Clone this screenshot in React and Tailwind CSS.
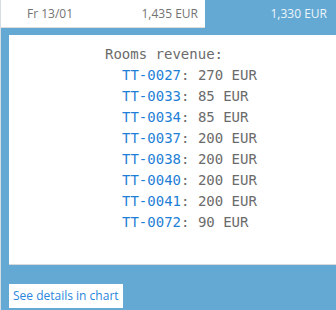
export default function App() {
  const rows = [
    ["TT-0027", "270"],
    ["TT-0033", "85"],
    ["TT-0034", "85"],
    ["TT-0037", "200"],
    ["TT-0038", "200"],
    ["TT-0040", "200"],
    ["TT-0041", "200"],
    ["TT-0072", "90"],
  ];
  return (
    <div className="w-[336px] h-[310px] overflow-hidden bg-white border-l border-[#d6dde3] flex flex-col" style={{ fontFamily: '"Open Sans", sans-serif' }}>
      <div className="flex h-[28px] shrink-0">
        <div className="w-[204px] flex items-center justify-between pl-[26px] pr-[7px] text-[12px] text-[#737373] border-b border-[#dcdcdc] bg-white">
          <span>Fr 13/01</span>
          <span>1,435 EUR</span>
        </div>
        <div className="flex-1 bg-[#64a9d3] flex items-center justify-end pr-[9px] text-[12px] text-[#eef5fa]">
          1,330 EUR
        </div>
      </div>
      <div className="flex-1 bg-[#64a9d3] pl-[8px] pt-[7px] flex flex-col">
        <div className="h-[230px] bg-white border-b border-[#d9d9d9] pl-[96px] pt-[9px]" style={{ fontFamily: '"DejaVu Sans Mono", monospace' }}>
          <div className="text-[14px] leading-[21px] text-[#6b6b6b] whitespace-pre">Rooms revenue:</div>
          {rows.map(([id, v]) => (
            <div key={id} className="text-[14px] leading-[21px] text-[#6b6b6b] whitespace-pre pl-[17px]">
              <span className="text-[#1f7fd6]">{id}</span>: {v} EUR
            </div>
          ))}
        </div>
        <div className="mt-[17px]">
          <span className="inline-block bg-white px-[4px] h-[24px] leading-[24px] text-[12px] text-[#2a86dc]">See details in chart</span>
        </div>
      </div>
    </div>
  );
}
